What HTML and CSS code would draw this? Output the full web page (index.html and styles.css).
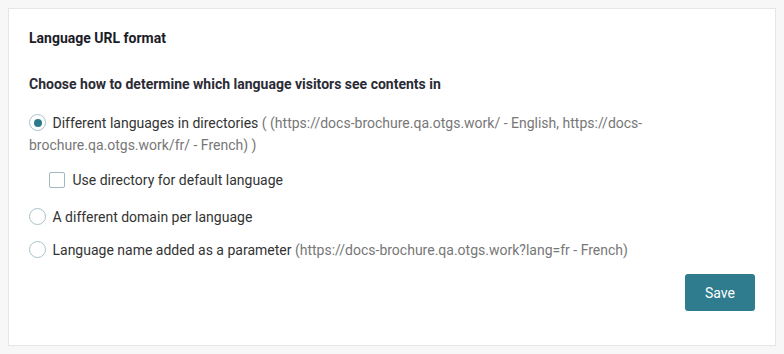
FILE: index.html
```html
<!DOCTYPE html>
<html lang="en">
<head>
    <meta charset="UTF-8">
    <meta name="viewport" content="width=device-width, initial-scale=1.0">
    <title>Language URL format</title>
    <link rel="stylesheet" href="styles.css">
</head>
<body>
    <div class="card">
        <h3 class="card-title">Language URL format</h3>
        <p class="card-subtitle">Choose how to determine which language visitors see contents in</p>

        <!-- URL format options -->
        <ul class="options">
            <li class="option option-first">
                <span class="radio checked"></span>
                <span class="label">Different languages in directories <span class="hint">( (https://docs-brochure.qa.otgs.work/ - English, https://docs-brochure.qa.otgs.work/fr/ - French) )</span></span>
            </li>
            <li class="sub-option">
                <span class="checkbox"></span>
                <span class="label">Use directory for default language</span>
            </li>
            <li class="option option-domain">
                <span class="radio"></span>
                <span class="label">A different domain per language</span>
            </li>
            <li class="option option-param">
                <span class="radio"></span>
                <span class="label">Language name added as a parameter <span class="hint">(https://docs-brochure.qa.otgs.work?lang=fr - French)</span></span>
            </li>
        </ul>

        <div class="actions">
            <button class="btn-save" type="button">Save</button>
        </div>
    </div>
</body>
</html>
```

FILE: styles.css
```css
/* Global styles */
body {
    font-family: Roboto, "Liberation Sans", Arial, sans-serif;
    background-color: #f7f7f7;
    margin: 0;
    padding: 8px;
    color: #333;
}

/* Card */
.card {
    background-color: #fff;
    border: 1px solid #e6e6e6;
    padding: 19px 20px 34px 20px;
}

.card-title {
    margin: 0;
    font-size: 14px;
    line-height: 20px;
    font-weight: bold;
    color: #1c1c28;
}

.card-subtitle {
    margin: 26px 0 0 0;
    font-size: 14px;
    line-height: 20px;
    font-weight: bold;
    color: #2b2b35;
}

/* Options list */
.options {
    list-style: none;
    margin: 18px 0 0 0;
    padding: 0;
}

.option,
.sub-option {
    font-size: 14px;
    line-height: 22px;
    color: #333;
}

.option .label {
    margin-left: 3px;
}

.hint {
    color: #777;
}

.sub-option {
    margin-top: 13px;
    padding-left: 20px;
}

.sub-option .label {
    margin-left: 4px;
}

.option-domain {
    margin-top: 15px;
}

.option-param {
    margin-top: 11px;
}

/* Radio and checkbox */
.radio {
    display: inline-block;
    box-sizing: border-box;
    width: 17px;
    height: 17px;
    border: 1px solid #a9c3c9;
    border-radius: 50%;
    vertical-align: -3px;
    position: relative;
}

.radio.checked::after {
    content: "";
    position: absolute;
    top: 3.5px;
    left: 3.5px;
    width: 8px;
    height: 8px;
    border-radius: 50%;
    background-color: #2c7b8c;
}

.checkbox {
    display: inline-block;
    box-sizing: border-box;
    width: 16px;
    height: 16px;
    border: 1px solid #9fb9bf;
    border-radius: 2px;
    vertical-align: -3px;
}

/* Save button */
.actions {
    display: flex;
    justify-content: flex-end;
    margin-top: 13px;
}

.btn-save {
    width: 70px;
    height: 37px;
    background-color: #2e7c8e;
    color: #fff;
    border: none;
    border-radius: 3px;
    font-family: Roboto, "Liberation Sans", Arial, sans-serif;
    font-size: 14px;
    cursor: pointer;
}
```
